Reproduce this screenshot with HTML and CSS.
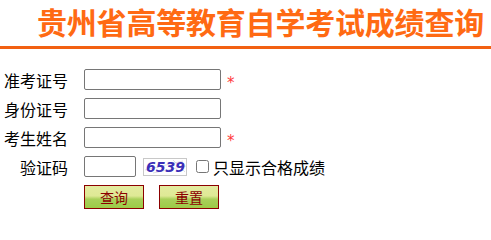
FILE: index.html
```html
<!DOCTYPE html>
<html lang="zh-CN">
<head>
<meta charset="utf-8">
<title>贵州省高等教育自学考试成绩查询</title>
<link rel="stylesheet" href="styles.css">
</head>
<body>
<header class="title">贵州省高等教育自学考试成绩查询</header>
<div class="rule"></div>
<form class="form">
  <label class="lbl">准考证号</label>
  <div class="field"><input class="txt" type="text"><span class="req">*</span></div>
  <label class="lbl">身份证号</label>
  <div class="field"><input class="txt" type="text"></div>
  <label class="lbl">考生姓名</label>
  <div class="field"><input class="txt" type="text"><span class="req">*</span></div>
  <label class="lbl">验证码</label>
  <div class="field">
    <input class="txt code" type="text">
    <span class="captcha">
      <svg width="44" height="18" viewBox="0 0 44 18">
        <rect x="0.5" y="0.5" width="43" height="17" fill="#fff" stroke="#c8c8c8"/>
        <path d="M2 12 L40 3 M10 15 L43 8 M30 2 L42 14" stroke="#c9c9d6" stroke-width="0.6" fill="none"/>
        <text x="3" y="14" font-family="DejaVu Sans, sans-serif" font-size="14" font-weight="bold" font-style="italic" fill="#3b2fb8">6539</text>
      </svg>
    </span>
    <label class="chk"><input type="checkbox" class="box">只显示合格成绩</label>
  </div>
  <span></span>
  <div class="btns">
    <button type="button" class="btn">查询</button>
    <button type="button" class="btn">重置</button>
  </div>
</form>
</body>
</html>
```
FILE: styles.css
```css
html, body {
  margin: 0;
  padding: 0;
  background: #fff;
  font-family: "Noto Sans CJK SC", "Noto Sans", sans-serif;
  color: #000;
}
.title {
  padding: 2px 0 0 37px;
  height: 44px;
  line-height: 38px;
  font-size: 30px;
  font-weight: bold;
  color: #ff6a13;
  white-space: nowrap;
  letter-spacing: -0.2px;
}
.rule {
  height: 3px;
  background: #f26011;
}
.form {
  display: grid;
  grid-template-columns: 68px auto;
  column-gap: 16px;
  grid-auto-rows: 29px;
  padding-top: 16px;
  align-items: center;
}
.lbl {
  font-size: 16px;
  text-align: right;
  line-height: 20px;
}
.field {
  display: flex;
  align-items: center;
}
.txt {
  box-sizing: border-box;
  width: 137px;
  height: 21px;
  margin: 0;
  padding: 0 3px;
  border: 1px solid #767676;
  border-radius: 2px;
  background: #fff;
}
.txt.code {
  width: 52px;
}
.req {
  color: #ff3a3a;
  font-family: "DejaVu Sans", sans-serif;
  font-size: 15px;
  margin-left: 6px;
  line-height: 15px;
  align-self: flex-start;
  margin-top: 7px;
}
.captcha {
  display: block;
  margin-left: 7px;
  height: 18px;
}
.captcha svg {
  display: block;
}
.chk {
  display: flex;
  align-items: center;
  font-size: 16px;
  margin-left: 9px;
}
.box {
  box-sizing: border-box;
  width: 13px;
  height: 13px;
  margin: 0 4px 0 0;
}
.btns {
  display: flex;
  gap: 15px;
  align-self: start;
  margin-top: 4px;
  height: 24px;
}
.btn {
  box-sizing: border-box;
  width: 60px;
  height: 24px;
  margin: 0;
  padding: 0;
  border: 1px solid #8b0000;
  background: linear-gradient(#e4eba0 0%, #dfe995 45%, #a9d05a 60%, #9ccb47 100%);
  color: #8b0000;
  font-family: "Noto Sans CJK SC", sans-serif;
  font-size: 14px;
  line-height: 20px;
}
```
